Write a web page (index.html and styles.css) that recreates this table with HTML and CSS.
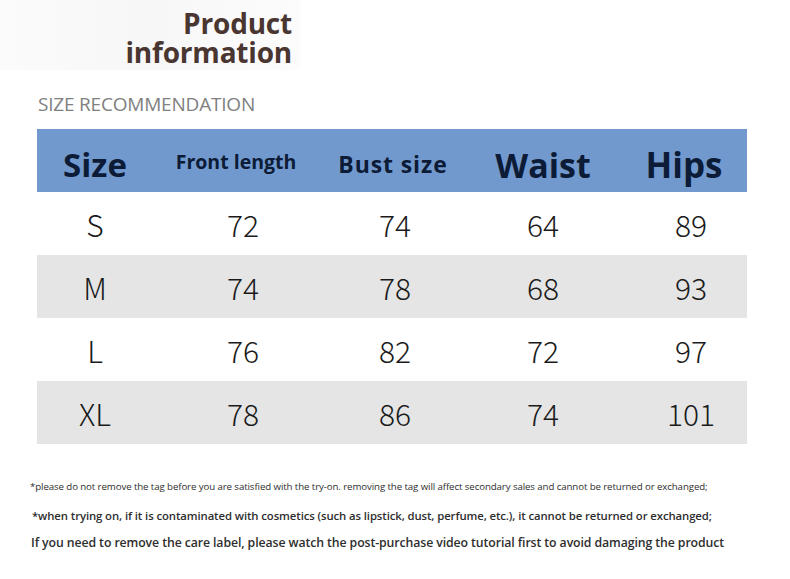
FILE: index.html
```html
<!DOCTYPE html>
<html>
<head>
<meta charset="utf-8">
<link rel="stylesheet" href="styles.css">
</head>
<body>
<div class="page">
  <header class="top">
    <h1 class="title"><span>Product</span><span>information</span></h1>
  </header>
  <h2 class="subtitle">SIZE RECOMMENDATION</h2>
  <div class="table">
    <div class="row head">
      <div class="cell h-size">Size</div>
      <div class="cell h-front">Front length</div>
      <div class="cell h-bust">Bust size</div>
      <div class="cell h-waist">Waist</div>
      <div class="cell h-hips">Hips</div>
    </div>
    <div class="row">
      <div class="cell">S</div><div class="cell">72</div><div class="cell">74</div><div class="cell">64</div><div class="cell c5">89</div>
    </div>
    <div class="row alt">
      <div class="cell">M</div><div class="cell">74</div><div class="cell">78</div><div class="cell">68</div><div class="cell c5">93</div>
    </div>
    <div class="row">
      <div class="cell">L</div><div class="cell">76</div><div class="cell">82</div><div class="cell">72</div><div class="cell c5">97</div>
    </div>
    <div class="row alt">
      <div class="cell">XL</div><div class="cell">78</div><div class="cell">86</div><div class="cell">74</div><div class="cell c5">101</div>
    </div>
  </div>
  <div class="notes">
    <p class="note n1">*please do not remove the tag before you are satisfied with the try-on. removing the tag will affect secondary sales and cannot be returned or exchanged;</p>
    <p class="note n2">*when trying on, if it is contaminated with cosmetics (such as lipstick, dust, perfume, etc.), it cannot be returned or exchanged;</p>
    <p class="note n3">If you need to remove the care label, please watch the post-purchase video tutorial first to avoid damaging the product</p>
  </div>
</div>
</body>
</html>
```

FILE: styles.css
```css
* { box-sizing: border-box; }
html, body { margin: 0; padding: 0; background: #ffffff; }
body { font-family: "Open Sans", "Noto Sans", sans-serif; }

.page {
  width: 790px;
  height: 579px;
  overflow: hidden;
  display: flex;
  flex-direction: column;
}

.top {
  height: 70px;
  width: 300px;
  padding-top: 9px;
  background: linear-gradient(90deg, #fbfbfb 0%, #f7f7f7 50%, #fcfcfc 100%);
}

.title {
  margin: 0;
  width: 292px;
  display: flex;
  flex-direction: column;
  align-items: flex-end;
  font-size: 28px;
  line-height: 29px;
  font-weight: 700;
  color: #4a3631;
  letter-spacing: -0.2px;
}

.subtitle {
  margin: 24px 0 0 38px;
  font-size: 19px;
  line-height: 20px;
  font-weight: 500;
  color: #808080;
  letter-spacing: -0.2px;
}

.table {
  margin: 15px 0 0 37px;
  width: 710px;
  display: flex;
  flex-direction: column;
}

.row {
  display: grid;
  grid-template-columns: 116px 180px 124px 172px 118px;
  height: 63px;
  align-items: center;
  font-family: "Noto Sans CJK SC", "Noto Sans", sans-serif;
  font-weight: 300;
  font-size: 30px;
  color: #1a1a1a;
  background: #ffffff;
}
.row.alt { background: #e5e5e5; }

.cell {
  display: flex;
  justify-content: center;
  line-height: 1;
}
.c5 { padding-left: 6px; }

.row.head {
  background: #7299ce;
  color: #0c1b36;
  font-family: "Open Sans", "Noto Sans", sans-serif;
  font-weight: 700;
  padding-top: 8px;
}
.h-size { font-size: 33px; }
.h-front { font-size: 19.5px; padding-right: 14px; padding-bottom: 6px; }
.h-bust { font-size: 23px; letter-spacing: 0.9px; padding-right: 4px; }
.h-waist { font-size: 34px; }
.h-hips { font-size: 35px; padding-right: 8px; }

.notes {
  margin: 36px 0 0 0;
  display: flex;
  flex-direction: column;
}
.note {
  margin: 0;
  white-space: nowrap;
  color: #2e2e2e;
}
.n1 {
  padding-left: 30px;
  font-size: 9.7px;
  line-height: 14px;
  letter-spacing: -0.1px;
}
.n2 {
  margin-top: 15px;
  padding-left: 32px;
  font-size: 11.35px;
  line-height: 14px;
  font-weight: 600;
  letter-spacing: -0.1px;
}
.n3 {
  margin-top: 13px;
  padding-left: 31px;
  font-size: 12.3px;
  line-height: 14px;
  font-weight: 600;
  letter-spacing: -0.1px;
}
```
